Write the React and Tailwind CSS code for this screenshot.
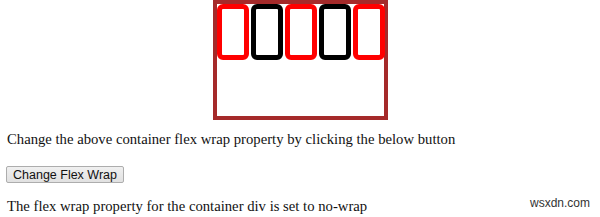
export default function App() {
  const colors = ["border-[#ff0000]", "border-black", "border-[#ff0000]", "border-black", "border-[#ff0000]"];
  return (
    <div className="relative w-[600px] h-[217px] bg-white overflow-hidden" style={{ fontFamily: '"Liberation Serif", serif' }}>
      <div className="mx-auto w-[175px] h-[120px] border-[4px] border-[#a52a2a] flex items-start gap-[2px] px-0">
        {colors.map((c, i) => (
          <div key={i} className={`w-[32px] h-[56px] shrink-0 border-[5px] rounded-[6px] ${c}`}></div>
        ))}
      </div>
      <p className="ml-[7px] mt-[11px] text-[14.7px] leading-[17px] text-[#111]">
        Change the above container flex wrap property by clicking the below button
      </p>
      <button
        className="block ml-[6px] mt-[18px] h-[17px] px-[6px] text-[12.5px] leading-[14px] text-[#111] border border-[#adadad] rounded-[2px] bg-gradient-to-b from-[#f0f0f0] to-[#e1e1e1]"
        style={{ fontFamily: '"Liberation Sans", Arial, sans-serif' }}
      >
        Change Flex Wrap
      </button>
      <p className="ml-[7px] mt-[15px] text-[14.7px] leading-[17px] text-[#111]">
        The flex wrap property for the container div is set to no-wrap
      </p>
      <span
        className="absolute right-[10px] bottom-[5px] text-[12px] text-[#333]"
        style={{ fontFamily: '"Liberation Sans", Arial, sans-serif' }}
      >
        wsxdn.com
      </span>
    </div>
  );
}
